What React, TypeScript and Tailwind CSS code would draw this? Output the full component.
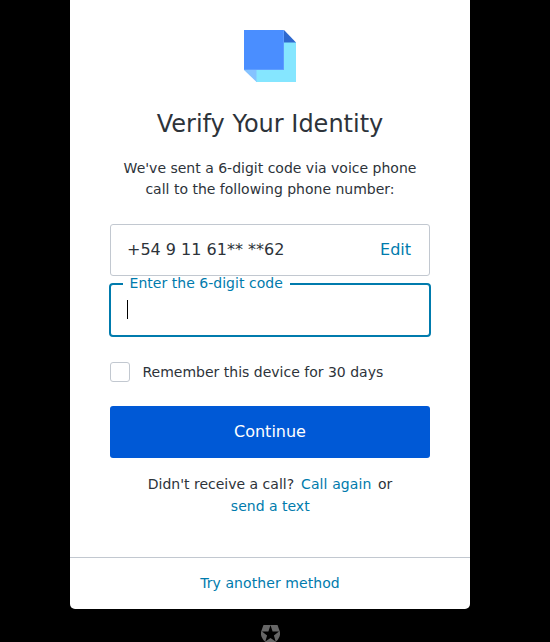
export default function App() {
  return (
    <div className="flex h-[642px] w-full flex-col items-center overflow-hidden bg-black pr-2.5 font-['DejaVu_Sans',sans-serif] text-[14px] text-[#2d333a]">
      <main className="flex h-[609px] w-[400px] shrink-0 flex-col rounded-b-[5px] bg-white">
        <div className="flex h-[557px] flex-col px-10 pt-[30px]">
          <svg className="h-[52px] w-[52px] self-center" viewBox="0 0 52 52">
            <path d="M12 12H52V52H12Z" fill="#85e6ff" />
            <path d="M0 40H12.500V52Z" fill="#85c2ff" />
            <path d="M40 0L52 12.500H40Z" fill="#2e69cf" />
            <path d="M0 0H40V40H0Z" fill="#66a3ff" />
            <path d="M0 0H39.300V39.300H0Z" fill="#4a8eff" />
          </svg>
          <h1 className="mt-6 text-center text-[24px] leading-[36px]">Verify Your Identity</h1>
          <p className="mt-4 text-center leading-[21px]">We've sent a 6-digit code via voice phone<br />call to the following phone number:</p>
          <div className="mt-6 flex h-[52px] items-center justify-between rounded-[3px] border border-[#c2c8d0] pr-[18px] pl-4 text-[16px]">
            <span>+54 9 11 61** **62</span>
            <a className="text-[#007bad]">Edit</a>
          </div>
          <div className="relative mt-[7px] -mx-px flex h-[54px] items-center rounded-[4px] border-2 border-[#007bad] pl-4">
            <label className="absolute -top-[8px] left-[11.5px] rounded-sm bg-white px-[7px] leading-[13px] tracking-[0.03px] text-[#007bad]">Enter the 6-digit code</label>
            <span className="mb-[2px] h-[19px] w-px bg-black" />
          </div>
          <div className="mt-[25px] flex h-5 items-center gap-[12.5px]">
            <span className="h-5 w-5 rounded-[3px] border border-[#c2c8d0]" />
            <span>Remember this device for 30 days</span>
          </div>
          <button className="mt-6 h-[52px] rounded-[3px] bg-[#0059d6] text-[16px] text-white">Continue</button>
          <p className="mt-[15px] text-center leading-[22px]">Didn't receive a call? <a className="ml-[2.5px] tracking-[0.1px] text-[#007bad]">Call again</a> <span className="ml-[2px]">or</span><br /><a className="ml-[0.5px] text-[#007bad]">send a text</a></p>
        </div>
        <footer className="flex h-[52px] items-center justify-center border-t border-[#c2c8d0] tracking-[0.08px] text-[#007bad]">Try another method</footer>
      </main>
      <svg className="mt-4 h-[21px] w-[19px] shrink-0" viewBox="0 0 19 21">
        <path d="M2.500 0H16.500L18.700 6C20 11 18 15 9.500 21C1 15 -1 11 0.300 6Z" fill="#666" />
        <path d="M9.500 0.300L11.600 6.500H18L12.900 10.400L14.700 16.500L9.500 13L4.300 16.500L6.100 10.400L1 6.500H7.400Z" fill="#000" />
      </svg>
    </div>
  );
}
